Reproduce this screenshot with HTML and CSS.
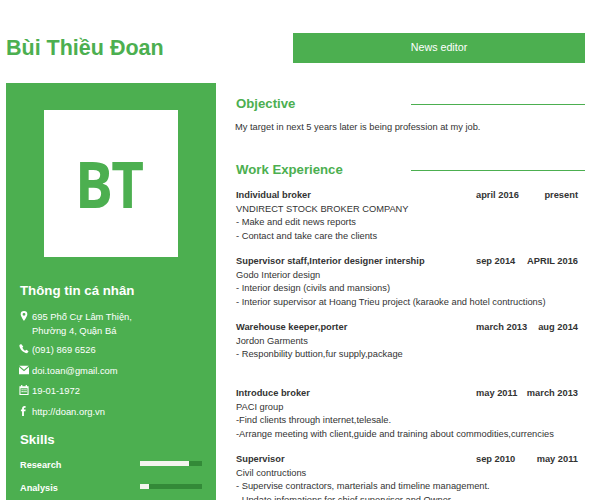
FILE: index.html
```html
<!DOCTYPE html>
<html lang="vi">
<head>
<meta charset="utf-8">
<title>Bùi Thiều Đoan</title>
<link rel="stylesheet" href="styles.css">
</head>
<body>
<div class="page">
  <header class="top">
    <h1 class="name">Bùi Thiều Đoan</h1>
    <div class="role">News editor</div>
  </header>
  <div class="columns">
    <aside class="side">
      <div class="logo"><span>BT</span></div>
      <h2 class="side-title">Thông tin cá nhân</h2>
      <ul class="contacts">
        <li><svg class="ico" viewBox="0 0 12 12"><path fill-rule="evenodd" d="M6 0a4 4 0 0 0-4 4c0 2.600 4 8 4 8s4-5.400 4-8a4 4 0 0 0-4-4zm0 2.300a1.700 1.700 0 1 1 0 3.400 1.700 1.700 0 0 1 0-3.400z"/></svg><span>695 Phố Cự Lâm Thiện,<br>Phường 4, Quận Bá</span></li>
        <li><svg class="ico" viewBox="0 0 12 12"><path d="M2.500 0 .5 1.200c-.3 4.300 4.600 9.700 9.300 9.800L11.500 8.800 8.800 6.800 7.300 8C6 7.200 4.700 5.700 4.100 4.400l1-1.500z"/></svg><span>(091) 869 6526</span></li>
        <li><svg class="ico" viewBox="0 0 12 12"><path d="M.3 1h11.400L6 5.800z"/><path d="M0 2.400V11h12V2.400L6 7.400z"/></svg><span>doi.toan@gmail.com</span></li>
        <li><svg class="ico" viewBox="0 0 12 12"><path fill-rule="evenodd" d="M2.500 0h1.500v1.500h4V0h1.500v1.500H11.500V12H.5V1.500h2zM1.800 4v6.800h8.400V4zM3 5h1.500v1.300H3zm2.300 0h1.500v1.300H5.300zm2.300 0h1.500v1.300H7.600zM3 7.300h1.500v1.300H3zm2.300 0h1.500v1.300H5.300zm2.300 0h1.500v1.300H7.600z"/></svg><span>19-01-1972</span></li>
        <li><svg class="ico" viewBox="0 0 12 12"><path d="M6.800 0C4.800 0 3.700 1.100 3.700 3v1.300H2.300v2h1.400V12h2.200V6.300h1.800l.3-2H5.900V3.200c0-.7.300-1.100 1-1.100h1V0z"/></svg><span>http://doan.org.vn</span></li>
      </ul>
      <h2 class="side-title skills-title">Skills</h2>
      <div class="skill"><span>Research</span><div class="track"><div class="fill" style="width:79%"></div></div></div>
      <div class="skill"><span>Analysis</span><div class="track"><div class="fill" style="width:15%"></div></div></div>
    </aside>
    <main class="main">
      <section class="sec">
        <div class="sec-head"><h2>Objective</h2><div class="rule"></div></div>
        <p class="obj">My target in next 5 years later is being profession at my job.</p>
      </section>
      <section class="sec work">
        <div class="sec-head"><h2>Work Experience</h2><div class="rule"></div></div>
        <article class="job">
          <div class="job-head"><b class="title">Individual broker</b><b class="from">april 2016</b><b class="to">present</b></div>
          <p>VNDIRECT STOCK BROKER COMPANY</p>
          <p>- Make and edit news reports</p>
          <p>- Contact and take care the clients</p>
        </article>
        <article class="job">
          <div class="job-head"><b class="title">Supervisor staff,Interior designer intership</b><b class="from">sep 2014</b><b class="to">APRIL 2016</b></div>
          <p>Godo Interior design</p>
          <p>- Interior design (civils and mansions)</p>
          <p>- Interior supervisor at Hoang Trieu project (karaoke and hotel contructions)</p>
        </article>
        <article class="job">
          <div class="job-head"><b class="title">Warehouse keeper,porter</b><b class="from">march 2013</b><b class="to">aug 2014</b></div>
          <p>Jordon Garments</p>
          <p>- Responbility buttion,fur supply,package</p>
        </article>
        <article class="job">
          <div class="job-head"><b class="title">Introduce broker</b><b class="from">may 2011</b><b class="to">march 2013</b></div>
          <p>PACI group</p>
          <p>-Find clients through internet,telesale.</p>
          <p>-Arrange meeting with client,guide and training about commodities,currencies</p>
        </article>
        <article class="job">
          <div class="job-head"><b class="title">Supervisor</b><b class="from">sep 2010</b><b class="to">may 2011</b></div>
          <p>Civil contructions</p>
          <p>- Supervise contractors, marterials and timeline management.</p>
          <p>- Update infomations for chief supervisor and Owner</p>
        </article>
      </section>
    </main>
  </div>
</div>
</body>
</html>
```
FILE: styles.css
```css
* { box-sizing: border-box; }
html, body { margin: 0; padding: 0; height: 500px; overflow: hidden; background: #fff; }
body { font-family: "Liberation Sans", Arial, sans-serif; color: #333; }
.page { padding: 33px 11px 0 6px; }
.top { display: flex; justify-content: space-between; align-items: center; height: 30px; margin-bottom: 20px; }
.name { margin: 0; font-size: 21.5px; line-height: 30px; font-weight: 700; color: #4caf50; }
.role { width: 292px; height: 30px; background: #4caf50; color: #fff; font-size: 10.700px; line-height: 29px; text-align: center; }
.columns { display: flex; gap: 19px; align-items: flex-start; }
.side { width: 210px; height: 417px; flex: none; padding: 27px 14px 0 14px; background: #4caf50; color: #fff; }
.logo { width: 134px; height: 147px; margin: 0 0 0 24px; background: #fff; display: flex; align-items: center; justify-content: center; }
.logo span { margin-right: 4px; font-family: "Open Sans", sans-serif; font-size: 65px; font-weight: 700; letter-spacing: -2px; color: #4caf50; line-height: 1; transform: scaleX(.87); }
.side-title { margin: 25px 0 0; font-size: 13.300px; line-height: 18px; font-weight: 700; }
.contacts { list-style: none; margin: 10px 0 0; padding: 0; font-size: 9.400px; line-height: 14px; }
.contacts li { display: flex; gap: 3px; margin-bottom: 6.500px; margin-left: -1px; }
.contacts li:first-child { margin-bottom: 5px; }
.ico { width: 10px; height: 10px; flex: none; margin-top: 1px; fill: #fff; }
.skills-title { margin-top: 12px; }
.skill { display: flex; justify-content: space-between; align-items: center; height: 14px; margin-top: 9px; font-size: 9.200px; font-weight: 700; }
.track { width: 62px; height: 5px; margin-top: -3px; background: #338a38; }
.fill { height: 100%; background: #f5f5f0; }
.main { flex: 1; min-width: 0; }
.sec { margin: 0; }
.sec-head { display: flex; justify-content: space-between; align-items: center; height: 18px; margin-top: 12px; padding-left: 1px; }
.sec-head h2 { margin: 0; font-size: 13.200px; line-height: 18px; font-weight: 700; color: #4caf50; }
.rule { width: 174px; height: 1.500px; margin-top: 1px; background: #4caf50; }
.obj { margin: 7px 0 0; font-size: 9.300px; line-height: 14px; }
.work { margin-top: 27px; }
.work .sec-head { margin-top: 0; }
.work .sec-head + .job { margin-top: 10px; }
.job { height: 66px; padding: 0 7px 0 1px; font-size: 9.300px; line-height: 13.500px; }
.job p { margin: 0; white-space: nowrap; }
.job-head { display: grid; grid-template-columns: 240px 1fr auto; }
.job-head b { font-weight: 700; }
.to { text-align: right; }
```
